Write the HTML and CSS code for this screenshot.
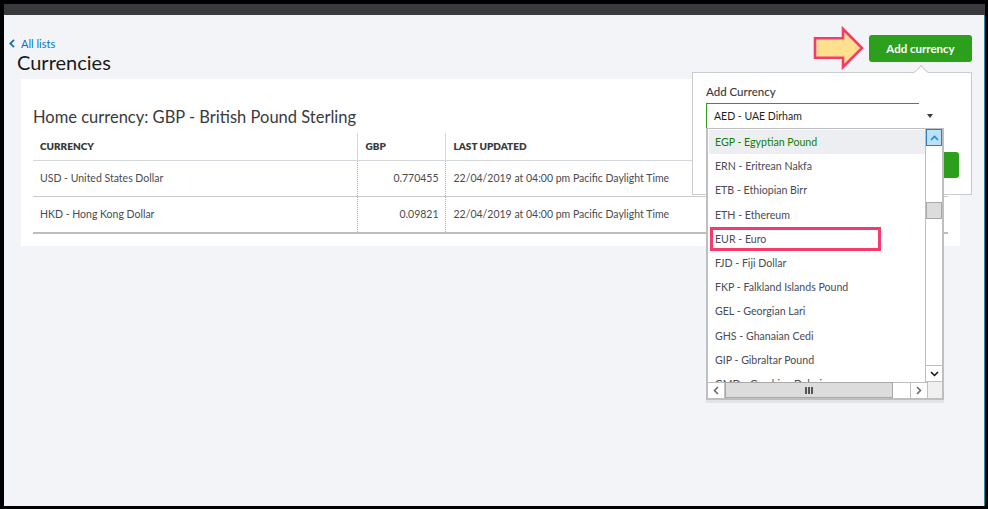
FILE: index.html
```html
<!DOCTYPE html>
<html lang="en">
<head>
<meta charset="utf-8">
<title>Currencies</title>
<link rel="stylesheet" href="styles.css">
</head>
<body>
<div class="frame">
  <svg class="top-icons" width="988" height="5" viewBox="0 0 988 5" aria-hidden="true">
    <path d="M775 1.5q5 3 10 0M884 1.5q7 3.500 14 0" fill="none" stroke="#c9cacc" stroke-width="1.300"/>
    <path d="M822.500 2h2v2h-2zM855 2h3v2h-3zM964 2h3v2h-3z" fill="#b9bbc0"/>
  </svg>
  <div class="topbar"></div>
  <main class="page">
    <header class="page-head">
      <div class="titles">
        <a class="back" href="#"><svg class="back-icon" width="6" height="9" viewBox="0 0 6 9" aria-hidden="true"><path d="M5 .8 1.300 4.500 5 8.200" fill="none" stroke="#1f6fb0" stroke-width="1.800"/></svg>All lists</a>
        <h1>Currencies</h1>
      </div>
      <button class="add-btn" type="button">Add currency</button>
    </header>
    <section class="card">
      <h2>Home currency: GBP - British Pound Sterling</h2>
      <table>
        <colgroup><col class="c1"><col class="c2"><col class="c3"></colgroup>
        <thead>
          <tr><th>CURRENCY</th><th class="shift">GBP</th><th class="shift">LAST UPDATED</th></tr>
        </thead>
        <tbody>
          <tr><td>USD - United States Dollar</td><td class="num">0.770455</td><td class="shift">22/04/2019 at 04:00 pm Pacific Daylight Time</td></tr>
          <tr><td>HKD - Hong Kong Dollar</td><td class="num">0.09821</td><td class="shift">22/04/2019 at 04:00 pm Pacific Daylight Time</td></tr>
        </tbody>
      </table>
    </section>
  </main>

  <svg class="callout-arrow" width="54" height="46" viewBox="0 0 54 46" aria-hidden="true">
    <path d="M2 13.300H30V4L49 23 30 42V32.700H2Z" fill="#ffe08f" stroke="#f43b6b" stroke-width="2.600"/>
  </svg>

  <aside class="popover">
    <span class="popover-caret"></span>
    <div class="label">Add Currency</div>
    <div class="select-row">
      <div class="select-input">AED - UAE Dirham</div>
      <span class="select-arrow"></span>
    </div>
    <div class="actions">
      <span class="btn-cancel"></span>
      <span class="btn-save"></span>
    </div>
    <div class="listbox">
      <div class="list-main">
        <ul class="options">
          <li class="selected">EGP - Egyptian Pound</li>
          <li>ERN - Eritrean Nakfa</li>
          <li>ETB - Ethiopian Birr</li>
          <li>ETH - Ethereum</li>
          <li class="marked">EUR - Euro</li>
          <li>FJD - Fiji Dollar</li>
          <li>FKP - Falkland Islands Pound</li>
          <li>GEL - Georgian Lari</li>
          <li>GHS - Ghanaian Cedi</li>
          <li>GIP - Gibraltar Pound</li>
          <li>GMD - Gambian Dalasi</li>
        </ul>
        <div class="vscroll">
          <span class="sb-btn sb-up"><svg width="9" height="6" viewBox="0 0 9 6" aria-hidden="true"><path d="M1 5 4.500 1.500 8 5" fill="none" stroke="#1c8cd0" stroke-width="1.600"/></svg></span>
          <span class="v-thumb"></span>
          <span class="sb-btn sb-down"><svg width="9" height="6" viewBox="0 0 9 6" aria-hidden="true"><path d="M1 1 4.500 4.500 8 1" fill="none" stroke="#111" stroke-width="1.500"/></svg></span>
        </div>
      </div>
      <div class="hscroll">
        <span class="sb-btn sb-left"><svg width="6" height="9" viewBox="0 0 6 9" aria-hidden="true"><path d="M5 1 1.500 4.500 5 8" fill="none" stroke="#666" stroke-width="1.500"/></svg></span>
        <span class="h-thumb"><svg width="8" height="7" viewBox="0 0 8 7" aria-hidden="true"><path d="M0 0h2v7H0zM3 0h2v7H3zM6 0h2v7H6z" fill="#555"/></svg></span>
        <span class="h-track"></span>
        <span class="sb-btn sb-right"><svg width="6" height="9" viewBox="0 0 6 9" aria-hidden="true"><path d="M1 1 4.500 4.500 1 8" fill="none" stroke="#666" stroke-width="1.500"/></svg></span>
        <span class="corner"></span>
      </div>
    </div>
  </aside>
</div>
</body>
</html>
```
FILE: styles.css
```css
*, *::before, *::after { box-sizing: border-box; }
html, body { margin: 0; padding: 0; }
body { font-family: "Lato", "Open Sans", sans-serif; color: #393a3d; }

.frame {
  position: relative;
  width: 988px;
  height: 509px;
  overflow: hidden;
  background: #f3f4f8;
  border-style: solid;
  border-color: #000;
  border-width: 4px 3px 3px 4px;
  display: flex;
  flex-direction: column;
}
.top-icons { position: absolute; left: -4px; top: -4px; }
.topbar { height: 11px; background: #393a3d; flex: none; }
.page {
  flex: 1;
  padding: 20px 12px 0 17px;
  border-right: 1px solid #2b8a9c;
}

.page-head { display: flex; justify-content: space-between; align-items: flex-start; height: 44px; }
.titles { margin-left: -12px; }
.back { display: flex; align-items: center; gap: 6px; height: 16px; font-size: 11px; color: #0077c5; text-decoration: none; }
.back-icon { flex: none; }
h1 { margin: 0 0 0 8px; font-size: 20px; font-weight: 400; line-height: 22px; color: #1a1a1a; }
.add-btn {
  width: 103px;
  height: 27px;
  border: 0;
  border-radius: 3px;
  background: #2ca01c;
  color: #fff;
  font: 700 11.500px "Lato", sans-serif;
}

.card { width: 939px; height: 167px; background: #fff; padding: 27px 12px 0; }
h2 { margin: 0; font-size: 16.500px; font-weight: 400; line-height: 22px; height: 27px; color: #393a3d; }
table { width: 915px; table-layout: fixed; border-collapse: collapse; font-size: 10.500px; }
.c1 { width: 324px; }
.c2 { width: 88px; }
th {
  height: 27px;
  padding: 0 7px;
  text-align: left;
  font-size: 10px;
  font-weight: 800;
  border-bottom: 1px solid #d4d7dc;
  border-right: 1px solid #d4d7dc;
}
th:last-child, td:last-child { border-right: 0; }
td {
  height: 36px;
  padding: 0 7px;
  border-bottom: 1px solid #c8c9cc;
  border-right: 1px dotted #b5b5b5;
  color: #4a4b4f;
}
tbody tr:last-child td { height: 37px; border-bottom: 2px solid #bdbdbd; }
th.shift, td.shift { padding-left: 8px; }
td.num { text-align: right; padding-right: 6px; }

.callout-arrow { position: absolute; left: 809px; top: 21px; }

.popover {
  position: absolute;
  left: 688px;
  top: 68px;
  width: 280px;
  height: 123px;
  background: #fff;
  border: 1px solid #c9cbce;
  padding: 10px 13px;
}
.popover-caret {
  position: absolute;
  left: 223px;
  top: -6px;
  width: 10px;
  height: 10px;
  background: #fff;
  border-left: 1px solid #c9cbce;
  border-top: 1px solid #c9cbce;
  transform: rotate(45deg);
}
.label { font-size: 11.500px; font-weight: 500; line-height: 17px; color: #393a3d; }
.select-row { display: flex; align-items: center; margin-top: 3px; }
.select-input {
  width: 213px;
  height: 26px;
  padding-left: 7px;
  border: 1px solid #2ca01c;
  border-right: 0;
  font-size: 10.500px;
  line-height: 24px;
  color: #1f1f1f;
}
.select-arrow {
  margin-left: 8px;
  border-left: 3.500px solid transparent;
  border-right: 3.500px solid transparent;
  border-top: 4px solid #393a3d;
}
.actions { display: flex; justify-content: space-between; margin-top: 23px; margin-right: -1px; }
.btn-cancel { width: 60px; height: 26px; border: 1px solid #8d9096; border-radius: 3px; }
.btn-save { width: 60px; height: 26px; background: #2ca01c; border-radius: 3px; }

.listbox {
  position: absolute;
  left: 13px;
  top: 55px;
  width: 238px;
  height: 272px;
  background: #fff;
  border: 2px solid #bdbfc2;
  border-top-width: 1px;
  border-bottom-width: 0;
  box-shadow: 0 3px 0 #e3e4e6;
  display: flex;
  flex-direction: column;
}
.list-main { flex: 1; display: flex; min-height: 0; }
.options {
  flex: 1;
  margin: 0;
  padding: 1px 0 0 1px;
  list-style: none;
  overflow: hidden;
  font-size: 10.600px;
  color: #4a4b55;
}
.options li { height: 24.200px; line-height: 24px; padding-left: 6px; }
.options .selected { background: #eceef1; color: #108000; }
.options .marked { position: relative; }
.options .marked::after {
  content: "";
  position: absolute;
  left: 1px;
  top: 0;
  width: 171px;
  height: 24px;
  border: 3px solid #f43b6b;
}
.vscroll {
  flex: none;
  width: 17px;
  border-left: 1px solid #bdbfc2;
  display: flex;
  flex-direction: column;
  align-items: stretch;
}
.sb-btn { display: flex; align-items: center; justify-content: center; flex: none; background: #fff; }
.sb-up { height: 17px; background: #b9e1fb; border: 1px solid #2f7fb5; }
.v-thumb { height: 17px; margin-top: 56px; background: #dcdcdc; border: 1px solid #a9a9a9; }
.sb-down { height: 17px; margin-top: auto; border-top: 1px solid #bdbfc2; border-bottom: 1px solid #bdbfc2; }
.hscroll { flex: none; height: 18px; display: flex; border-bottom: 2px solid #bdbfc2; }
.sb-left { width: 17px; border-top: 1px solid #bdbfc2; border-right: 1px solid #bdbfc2; }
.h-thumb { width: 168px; display: flex; align-items: center; justify-content: center; background: #dcdcdc; border: 1px solid #a9a9a9; }
.h-track { width: 17px; border-top: 1px solid #bdbfc2; }
.sb-right { width: 17px; border-top: 1px solid #bdbfc2; border-left: 1px solid #bdbfc2; }
.corner { flex: 1; background: #f0f0f0; border-left: 1px solid #bdbfc2; }
```
